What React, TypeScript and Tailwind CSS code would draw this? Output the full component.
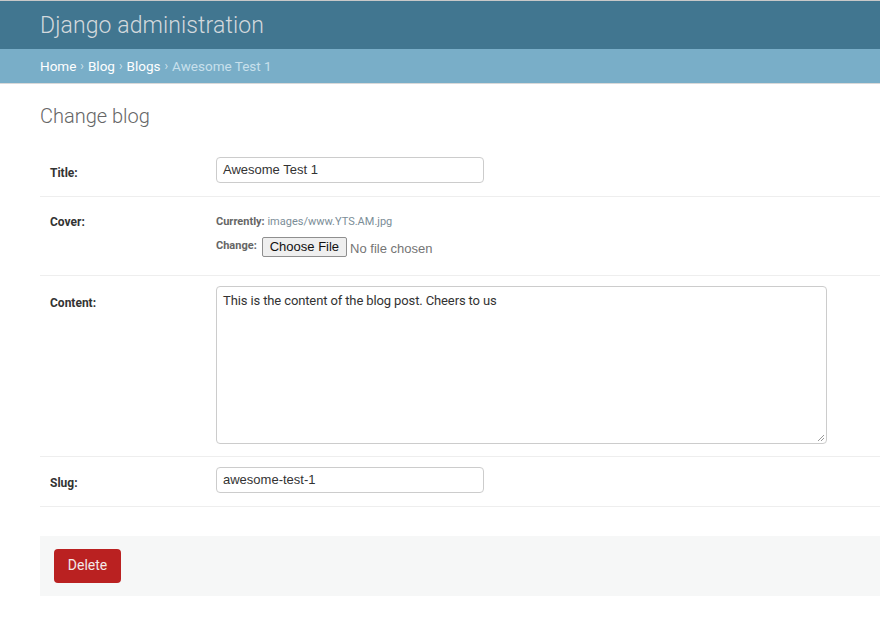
import React from "react";

export default function App() {
  const roboto = { fontFamily: "Roboto, 'Liberation Sans', sans-serif" };
  const arial = { fontFamily: "'Liberation Sans', Arial, sans-serif" };
  return (
    <div className="w-[880px] h-[630px] bg-white overflow-hidden" style={roboto}>
      <div className="h-[1px] bg-[#c8c8c8]" />
      <div className="h-[48px] bg-[#417690] px-[40px] pt-[3px] flex items-center">
        <span className="text-[23px] font-light text-[#d3d9dd] tracking-[0.1px]">Django administration</span>
      </div>
      <div className="h-[35px] bg-[#79aec8] px-[40px] flex items-center text-[13.5px] text-white border-b border-[#d9d9d9]">
        <span>Home</span>
        <span className="mx-[4px] text-[#d0e3ec] text-[12px]">›</span>
        <span>Blog</span>
        <span className="mx-[4px] text-[#d0e3ec] text-[12px]">›</span>
        <span>Blogs</span>
        <span className="mx-[4px] text-[#d0e3ec] text-[12px]">›</span>
        <span className="text-[#c8e0ec]">Awesome Test 1</span>
      </div>
      <div className="pl-[40px]">
        <h1 className="text-[20px] font-light text-[#666] mt-[22px] h-[21px] leading-[21px]">Change blog</h1>
        <div className="mt-[20px]">
          {/* Title */}
          <div className="flex pl-[10px] pt-[10px] pb-[13px] border-b border-[#eeeeee]">
            <div className="w-[166px] pt-[7px] text-[12px] font-bold text-[#333]">Title:</div>
            <div className="w-[268px] h-[26px] border border-[#cccccc] rounded-[4px] flex items-center px-[6px] text-[13px] text-[#333]" style={arial}>
              Awesome Test 1
            </div>
          </div>
          {/* Cover */}
          <div className="flex pl-[10px] pt-[18px] pb-[16px] border-b border-[#eeeeee]">
            <div className="w-[166px] leading-[12px] pt-[1px] text-[12px] font-bold text-[#333]">Cover:</div>
            <div className="flex flex-col">
              <div className="text-[11px] leading-[14px] text-[#8a8a8a]">
                <span className="font-bold text-[#666]">Currently:</span> <span className="text-[#7b8d97]">images/www.YTS.AM.jpg</span>
              </div>
              <div className="flex items-start mt-[8px]">
                <span className="text-[11px] font-bold text-[#666] mt-[1px]">Change:</span>
                <div className="ml-[5px] h-[20px] px-[7px] bg-[#efefef] border border-[#8f8f8f] rounded-[2px] flex items-center text-[13px] text-[#111]" style={arial}>
                  Choose File
                </div>
                <span className="ml-[3px] text-[13px] text-[#757575] mt-[2px]" style={arial}>No file chosen</span>
              </div>
            </div>
          </div>
          {/* Content */}
          <div className="flex pl-[10px] pt-[10px] pb-[12px] border-b border-[#eeeeee]">
            <div className="w-[166px] pt-[8px] text-[12px] font-bold text-[#333]">Content:</div>
            <div className="relative w-[611px] h-[158px] border border-[#cccccc] rounded-[4px] px-[6px] pt-[4px] text-[13px] tracking-[-0.12px] text-[#333]">
              This is the content of the blog post. Cheers to us
              <svg className="absolute right-[1px] bottom-[1px]" width="9" height="9" viewBox="0 0 9 9">
                <line x1="8" y1="2" x2="2" y2="8" stroke="#999" strokeWidth="1" />
                <line x1="8" y1="5" x2="5" y2="8" stroke="#999" strokeWidth="1" />
              </svg>
            </div>
          </div>
          {/* Slug */}
          <div className="flex pl-[10px] pt-[10px] pb-[13px] border-b border-[#eeeeee]">
            <div className="w-[166px] pt-[7px] text-[12px] font-bold text-[#333]">Slug:</div>
            <div className="w-[268px] h-[26px] border border-[#cccccc] rounded-[4px] flex items-center px-[6px] text-[13px] text-[#333]" style={arial}>
              awesome-test-1
            </div>
          </div>
        </div>
        <div className="mt-[29px] h-[60px] bg-[#f6f7f7] pl-[14px] flex items-center">
          <div className="w-[67px] h-[34px] bg-[#ba2121] rounded-[4px] flex items-center justify-center text-[14px] text-[#f3e9e9]">
            Delete
          </div>
        </div>
      </div>
    </div>
  );
}
